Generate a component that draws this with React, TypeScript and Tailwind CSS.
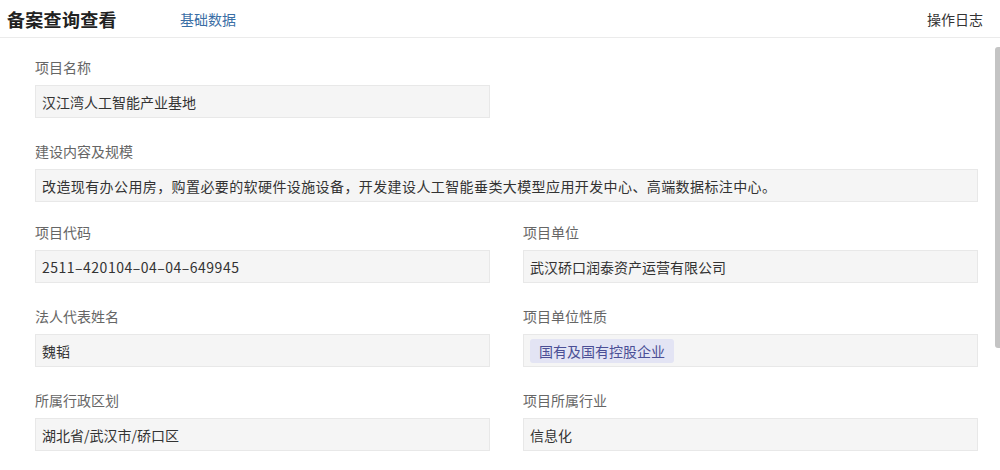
import React from 'react';

const font = { fontFamily: '"Noto Sans CJK SC", "Noto Sans", sans-serif' };

function Field(props: { label: string; children: React.ReactNode; wide?: boolean }) {
  return (
    <div className={props.wide ? 'col-span-2 -mb-[3px]' : ''}>
      <div className="h-5 text-sm leading-5 text-[#666]">{props.label}</div>
      <div className="mt-2 flex h-[33px] items-center border border-[#e8e8e8] bg-[#f5f5f5] px-[6px] text-sm text-[#333]">
        {props.children}
      </div>
    </div>
  );
}

export default function App() {
  return (
    <div className="relative h-[470px] w-[1000px] overflow-hidden bg-white" style={font}>
      <header className="flex h-[38px] items-center border-b border-[#ebebeb] pl-[7px] pr-[17px]">
        <h1 className="w-[173px] text-lg font-bold tracking-[0.3px] text-[#222]">备案查询查看</h1>
        <span className="text-sm text-[#3a6ea5]">基础数据</span>
        <span className="ml-auto text-sm text-[#333]">操作日志</span>
      </header>
      <main className="grid grid-cols-2 gap-x-[33px] gap-y-[23px] pl-[35px] pr-[22px] pt-[19px]">
        <Field label="项目名称">汉江湾人工智能产业基地</Field>
        <div />
        <Field label="建设内容及规模" wide>
          <span className="tracking-[0.4px]">
            改造现有办公用房，购置必要的软硬件设施设备，开发建设人工智能垂类大模型应用开发中心、高端数据标注中心。
          </span>
        </Field>
        <Field label="项目代码">
          <span className="tracking-[0.5px]">2511–420104–04–04–649945</span>
        </Field>
        <Field label="项目单位">武汉硚口润泰资产运营有限公司</Field>
        <Field label="法人代表姓名">魏韬</Field>
        <Field label="项目单位性质">
          <span className="rounded-[3px] bg-[#e3e4f4] px-[9px] py-[2px] text-[#4b4f96]">国有及国有控股企业</span>
        </Field>
        <Field label="所属行政区划">湖北省/武汉市/硚口区</Field>
        <Field label="项目所属行业">信息化</Field>
      </main>
      <div className="absolute right-0 top-[47px] h-[301px] w-[5px] rounded-l-[3px] bg-[#c4c4c4]" />
    </div>
  );
}
